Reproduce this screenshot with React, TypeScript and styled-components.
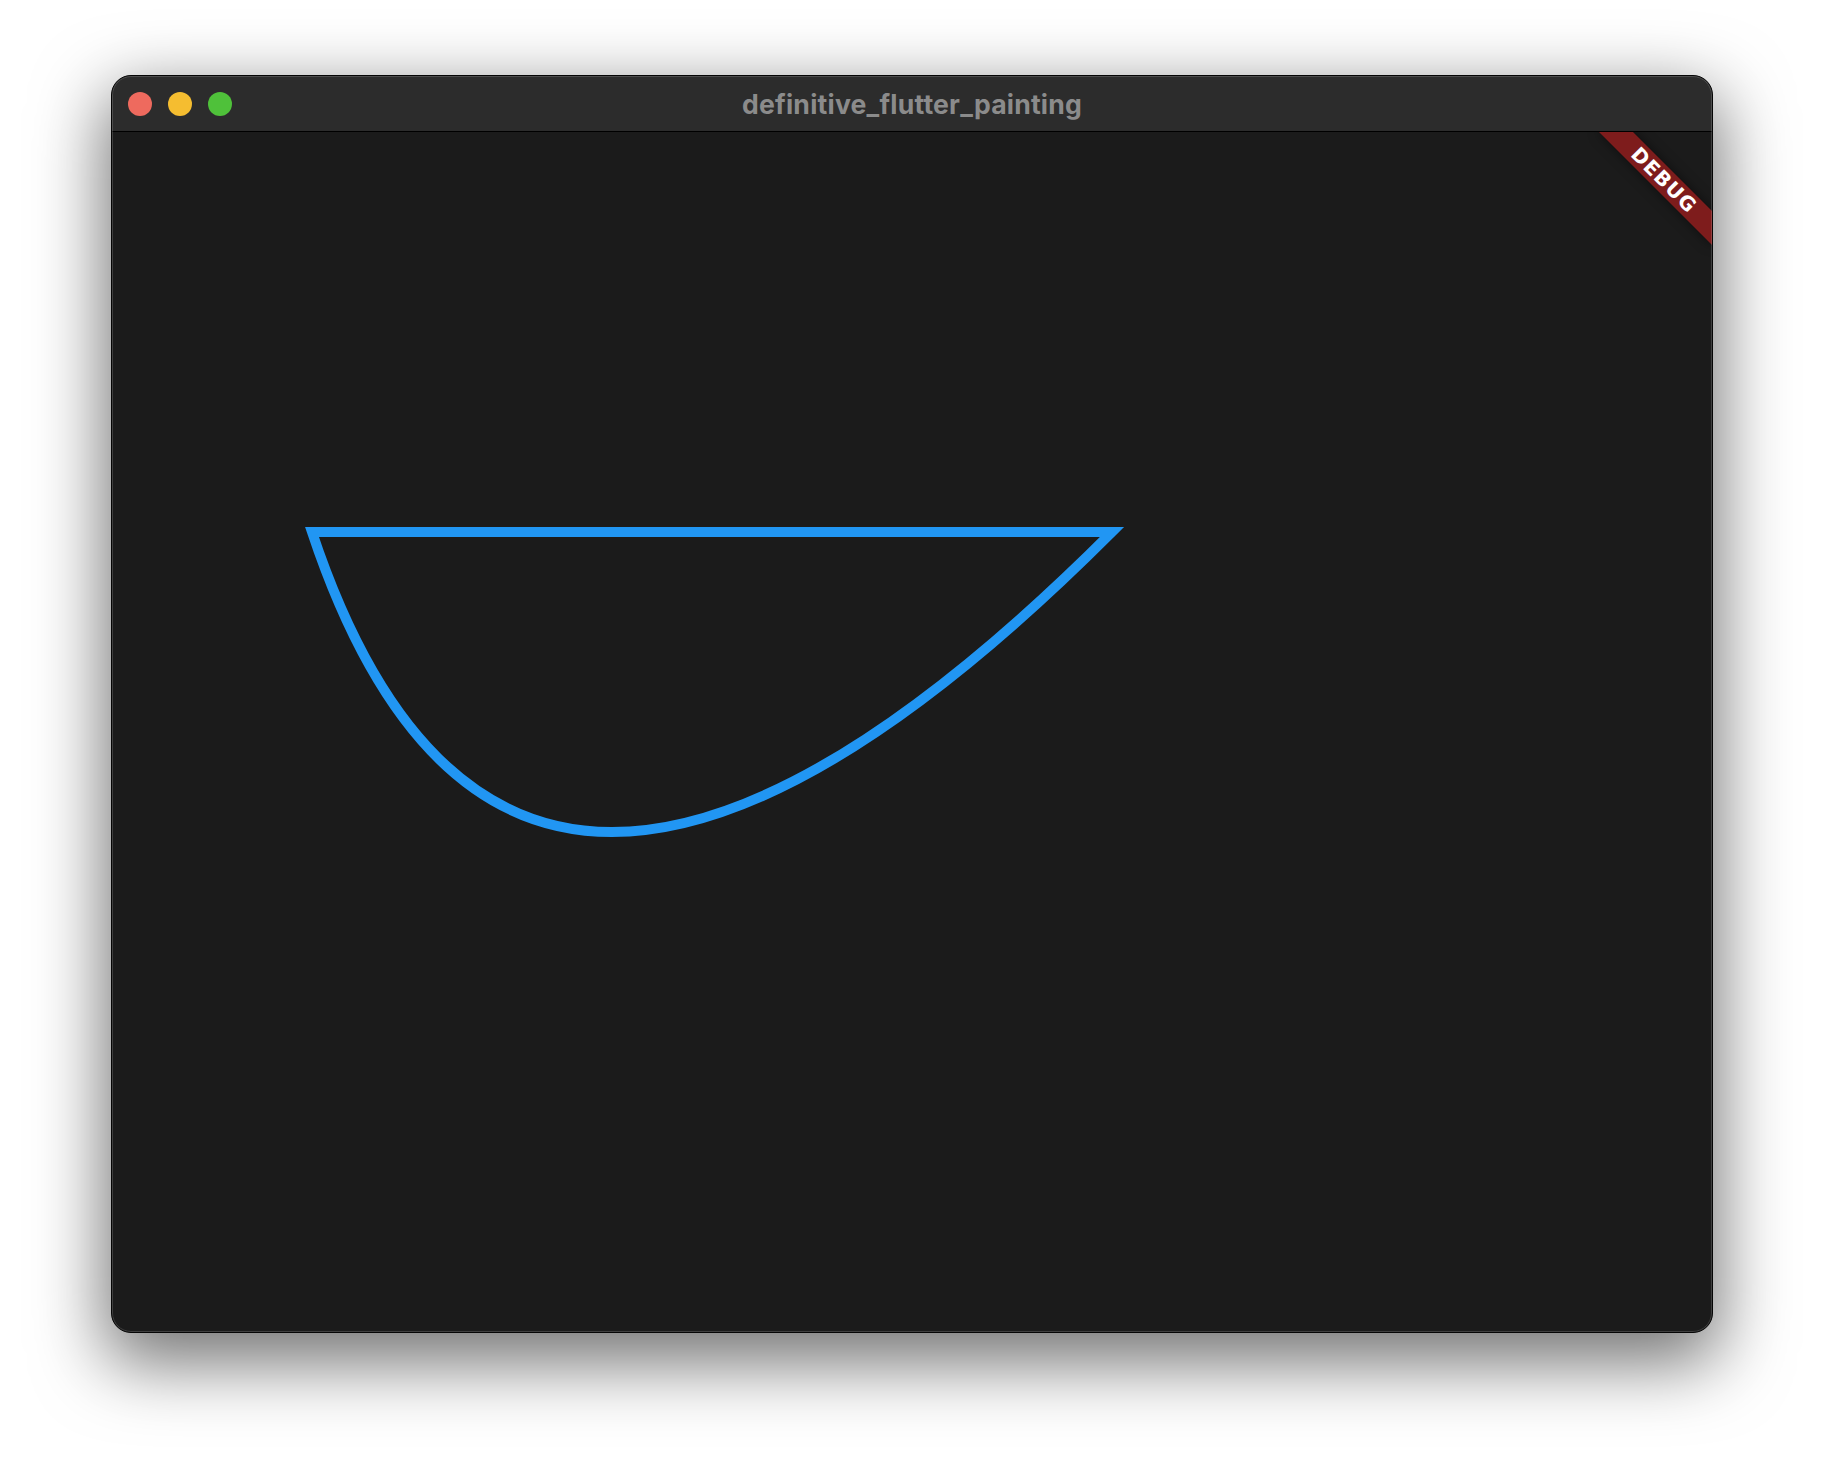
import styled, { createGlobalStyle } from 'styled-components'

const GlobalStyle = createGlobalStyle`
    html, body {
        margin: 0;
        padding: 0;
        background: #ffffff;
    }
    * {
        box-sizing: border-box;
    }
`

const Page = styled.div`
    width: 1824px;
    height: 1480px;
    padding: 75px 0 0 111px;
    overflow: hidden;
`

const Window = styled.div`
    position: relative;
    width: 1602px;
    border: 1px solid #050505;
    border-radius: 20px;
    overflow: hidden;
    background: #1b1b1b;
    box-shadow: 0 24px 70px 6px rgba(0, 0, 0, 0.55);

    &::after {
        content: '';
        position: absolute;
        inset: 0;
        border: 1px solid rgba(255, 255, 255, 0.16);
        border-radius: 19px;
        pointer-events: none;
    }
`

const TitleBar = styled.div`
    display: grid;
    grid-template-columns: 1fr auto 1fr;
    align-items: center;
    height: 56px;
    padding: 0 16px;
    background: #2c2c2c;
    border-bottom: 1px solid #000;
`

const Lights = styled.div`
    display: flex;
    gap: 16px;
    align-items: center;
`

const Light = styled.span<{ $color: string }>`
    width: 24px;
    height: 24px;
    border-radius: 50%;
    background: ${p => p.$color};
`

const Title = styled.div`
    font-family: Inter, 'Liberation Sans', sans-serif;
    font-weight: 700;
    font-size: 26.6px;
    color: #8b8b8b;
    letter-spacing: 0.2px;
`

const Content = styled.div`
    position: relative;
    height: 1200px;
    overflow: hidden;
    background: #1b1b1b;
`

const Canvas = styled.svg`
    display: block;
`

// flutter's checked mode banner, top-right corner
const Banner = styled.div`
    position: absolute;
    top: 36px;
    right: -32px;
    width: 160px;
    height: 24px;
    transform: rotate(45deg);
    background: rgba(183, 28, 28, 0.63);
    box-shadow: 0 0 12px rgba(0, 0, 0, 0.5);
    display: flex;
    align-items: center;
    justify-content: center;
    font-family: 'DejaVu Sans', 'Liberation Sans', sans-serif;
    font-weight: 700;
    font-size: 20px;
    line-height: 1;
    letter-spacing: 1px;
    color: #ffffff;
`

export default function App() {
    return (
        <Page>
            <GlobalStyle />
            <Window>
                <TitleBar>
                    <Lights>
                        <Light $color="#ee6a5e" />
                        <Light $color="#f5bd30" />
                        <Light $color="#4fc13a" />
                    </Lights>
                    <Title>definitive_flutter_painting</Title>
                    <div />
                </TitleBar>
                <Content>
                    <Canvas width={1600} height={1200} viewBox="0 0 800 600">
                        <path
                            d="M100 200 L500 200 Q200 500 100 200 Z"
                            fill="none"
                            stroke="#2196f3"
                            strokeWidth={5}
                            strokeLinejoin="miter"
                            strokeMiterlimit={4}
                        />
                    </Canvas>
                    <Banner>DEBUG</Banner>
                </Content>
            </Window>
        </Page>
    )
}
